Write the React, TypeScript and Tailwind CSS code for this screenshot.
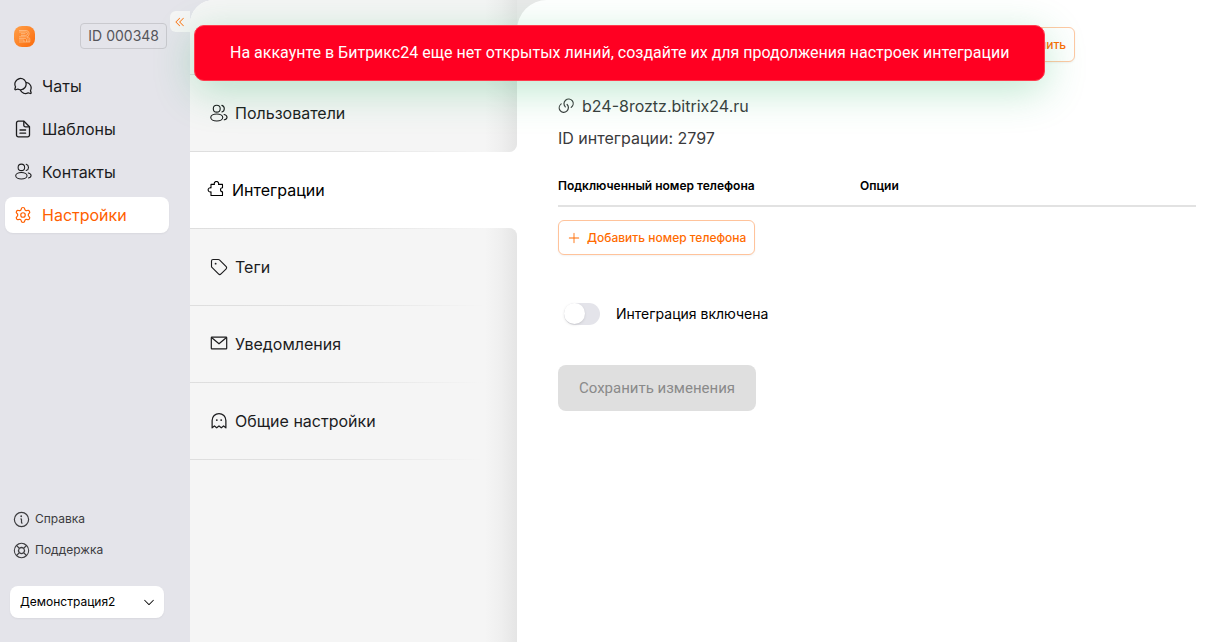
import type { ReactNode } from "react";
import { Settings, Tag } from "lucide-react";
import {
  PiCaretDoubleLeft,
  PiCaretDown,
  PiChatsCircle,
  PiGhost,
  PiInfo,
  PiLifebuoy,
  PiPlus,
} from "react-icons/pi";

function UsersIcon({ size }: { size: number }) {
  return (
    <svg width={size} height={size} viewBox="0 0 24 24" fill="none" stroke="currentColor" strokeWidth="1.5" strokeLinecap="round" aria-hidden="true">
      <circle cx="9" cy="6.2" r="4.6" />
      <path d="M15.8 1.8a4.600 4.600 0 0 1 0 8.800" />
      <ellipse cx="9" cy="18" rx="8" ry="4.600" />
      <path d="M18.800 14c2.300.6 3.900 1.900 3.900 3.600s-1.500 3-3.700 3.500" />
    </svg>
  );
}

function PuzzleIcon() {
  return (
    <svg width="18" height="18" viewBox="0 0 18 18" fill="none" stroke="currentColor" strokeWidth="1.1" strokeLinejoin="round" aria-hidden="true">
      <path d="M4 3.400H7.400a2.200 2.200 0 1 1 4.100 0H15.500V6.800a2 2 0 1 0 0 4V14.500H4V10.800a2.100 2.100 0 1 1 0-3.900Z" />
    </svg>
  );
}

function ChainIcon() {
  return (
    <svg width="17" height="17" viewBox="0 0 17 17" fill="none" stroke="currentColor" strokeWidth="1.2" strokeLinecap="round" aria-hidden="true">
      <path d="M3.200 5.900C1 7.700.700 10.600 2 12.400c1.600 2.300 4.800 2.500 6.800.7 2.100-1.900 2.100-4.700.3-6.600" />
      <path d="M13.200 8.900C15.400 7.100 15.700 4.200 14.400 2.400 12.800.1 9.600-.1 7.600 1.700 5.500 3.600 5.500 6.400 7.300 8.300" transform="translate(0 .5)" />
    </svg>
  );
}

function DocumentIcon() {
  return (
    <svg width="18" height="18" viewBox="0 0 18 18" fill="none" stroke="currentColor" strokeWidth="1.3" strokeLinecap="round" strokeLinejoin="round" aria-hidden="true">
      <path d="M10 1.200H4.300A1.800 1.800 0 0 0 2.500 3v12a1.800 1.800 0 0 0 1.800 1.800h9.400a1.800 1.800 0 0 0 1.800-1.800V6.800Z" />
      <path d="M9.800 1.400V5.200a1.700 1.700 0 0 0 1.700 1.700h3.800" />
      <path d="M6 10h5.600M6 13.200h5.600" />
    </svg>
  );
}

function EnvelopeIcon() {
  return (
    <svg width="18" height="18" viewBox="0 0 18 18" fill="none" stroke="currentColor" strokeWidth="1.2" strokeLinejoin="round" aria-hidden="true">
      <rect x="1.300" y="2.200" width="15.400" height="11.600" rx="0.6" />
      <path d="m1.500 2.500 7.500 6.300L16.500 2.500" />
    </svg>
  );
}

function Logo() {
  return (
    <svg width="21" height="21" viewBox="0 0 21 21" fill="none" role="img" aria-label="Логотип">
      <defs>
        <linearGradient id="logo-fill" x1="0" y1="0" x2="1" y2="1">
          <stop offset="0" stopColor="#ffa04a" />
          <stop offset="1" stopColor="#fb6a0b" />
        </linearGradient>
      </defs>
      <rect width="21" height="21" rx="8" fill="url(#logo-fill)" />
      <g stroke="#ffd0a5" strokeWidth="0.7" opacity="0.9">
        <path d="M5 4.500h7a3.200 3.200 0 0 1 1.300 6.100c1.600.3 2.500 1.400 2.500 3V16" />
        <path d="M5 6h6.800a1.700 1.700 0 0 1 0 3.400H7" />
        <path d="M7 7.700h4.500M5 10.800h6.500c1.700 0 2.600.9 2.600 2.500V16" />
        <path d="M5 12.400h6c1 0 1.500.5 1.500 1.500V16M5 14h5v2M5 16h11" />
      </g>
    </svg>
  );
}

const menu: { label: string; icon: ReactNode; active?: boolean }[] = [
  { label: "Чаты", icon: <PiChatsCircle size={20} /> },
  { label: "Шаблоны", icon: <DocumentIcon /> },
  { label: "Контакты", icon: <UsersIcon size={17} /> },
  { label: "Настройки", icon: <Settings size={18} strokeWidth={1.6} />, active: true },
];

const lowerSections: { label: string; icon: ReactNode }[] = [
  { label: "Теги", icon: <Tag size={18} strokeWidth={1.5} /> },
  { label: "Уведомления", icon: <EnvelopeIcon /> },
  { label: "Общие настройки", icon: <PiGhost size={20} className="-mx-px" /> },
];

function Divider() {
  return <div className="h-px bg-linear-to-r from-[#dedede] via-[#e2e2e2] to-transparent" />;
}

function SectionLink({ label, icon }: { label: string; icon: ReactNode }) {
  return (
    <div>
      <a href="#" className="flex h-[76px] items-center gap-[7px] pl-5">
        {icon}
        {label}
      </a>
      <Divider />
    </div>
  );
}

function EdgeShade() {
  return <div className="w-8 shrink-0 bg-linear-to-r from-transparent via-[#efefef] to-[#e5e5e5]" />;
}

function Sidebar() {
  return (
    <aside className="relative flex w-[190px] shrink-0 flex-col bg-[#e4e4ea]">
      <div className="flex h-[63px] items-center justify-between pt-[9px] pr-[23px] pl-3.5">
        <Logo />
        <span className="rounded border border-[#c9c9ce] px-[7px] text-sm leading-6 text-[#55555a]">ID 000348</span>
      </div>
      <button type="button" aria-label="Свернуть меню" className="absolute top-[11px] right-0 flex h-[21px] w-5 items-center justify-center rounded-l-md bg-[#f5f5f5] text-[#ff6b00]">
        <PiCaretDoubleLeft size={12} />
      </button>
      <nav className="flex flex-col gap-2 pt-[5px] pr-[21px] pl-[5px]">
        {menu.map((item) => (
          <a
            key={item.label}
            href="#"
            className={
              item.active
                ? "flex h-9 items-center rounded-lg bg-white pl-2 text-base text-[#ff5f00] shadow-xs"
                : "flex h-[35px] items-center rounded-lg pl-2 text-base text-[#1c1c1e]"
            }
          >
            <span className="flex w-5 justify-center">{item.icon}</span>
            <span className="pl-[9px]">{item.label}</span>
          </a>
        ))}
      </nav>
      <div className="mt-auto flex flex-col gap-[11px] pl-3 text-xs leading-5 text-[#3c3c3f]">
        <a href="#" className="flex items-center gap-1">
          <PiInfo size={19} />
          Справка
        </a>
        <a href="#" className="flex items-center gap-1">
          <PiLifebuoy size={19} />
          Поддержка
        </a>
      </div>
      <div className="grid pt-[26px] pr-[26px] pb-6 pl-2.5">
        <select aria-label="Аккаунт" className="col-start-1 row-start-1 h-8 appearance-none rounded-lg bg-white pl-2.5 text-xs text-black shadow-xs">
          <option>Демонстрация2</option>
        </select>
        <PiCaretDown size={14} className="pointer-events-none col-start-1 row-start-1 mr-2 self-center justify-self-end" />
      </div>
    </aside>
  );
}

function SettingsNav() {
  return (
    <nav className="flex w-[327px] shrink-0 flex-col overflow-hidden rounded-tl-3xl bg-white text-base text-[#1c1c1e]">
      <div className="flex overflow-hidden rounded-br-lg bg-[#f5f5f5]">
        <div className="flex-1">
          <div className="h-[74px]" />
          <Divider />
          <SectionLink label="Пользователи" icon={<UsersIcon size={18} />} />
        </div>
        <EdgeShade />
      </div>
      <a href="#" className="flex h-[76px] items-center gap-[7px] pl-[17px] text-black">
        <PuzzleIcon />
        Интеграции
      </a>
      <div className="flex flex-1 overflow-hidden rounded-tr-lg bg-[#f5f5f5]">
        <div className="flex-1">
          <Divider />
          {lowerSections.map((s) => (
            <SectionLink key={s.label} label={s.label} icon={s.icon} />
          ))}
        </div>
        <EdgeShade />
      </div>
    </nav>
  );
}

function Content() {
  return (
    <div className="flex min-w-0 flex-1 bg-[#e9e9e9]">
      <main className="min-w-0 flex-1 rounded-tl-[30px] bg-white pt-[27px] pr-[35px] pl-[41px]">
        <div className="flex pl-[433px]">
          <button type="button" className="h-[35px] rounded-md border border-[#ffc9a3] bg-white px-2 text-xs font-medium text-[#ff6b00] shadow-xs">
            Отключить
          </button>
        </div>
        <div className="mt-8 flex items-center gap-[7px] text-base text-[#3a3a3c]">
          <ChainIcon />
          b24-8roztz.bitrix24.ru
        </div>
        <p className="mt-2 text-base text-[#3a3a3c]">ID интеграции: 2797</p>
        <table className="mt-6 w-full table-fixed text-left text-xs text-black">
          <thead>
            <tr className="h-8 border-b-2 border-[#e2e2e2] align-top">
              <th className="w-[302px] pt-1 font-semibold">Подключенный номер телефона</th>
              <th className="pt-1 font-semibold">Опции</th>
            </tr>
          </thead>
        </table>
        <button type="button" className="mt-[13px] flex h-[35px] items-center gap-1.5 rounded-md border border-[#ffc39b] bg-white px-2 text-xs font-medium text-[#ff6b00] shadow-xs">
          <PiPlus size={14} />
          Добавить номер телефона
        </button>
        <label className="mt-12 flex h-[22px] items-center gap-4 pl-1.5 text-sm text-black">
          <input
            type="checkbox"
            role="switch"
            className="h-[22px] w-9 appearance-none rounded-full bg-[#e4e4ea] before:block before:size-[21px] before:rounded-full before:bg-white before:shadow"
          />
          Интеграция включена
        </label>
        <button type="button" disabled className="mt-10 h-[46px] rounded-lg bg-[#dfdfdf] px-[21px] font-[Roboto,sans-serif] text-[15px] text-[#8a8a8a]">
          Сохранить изменения
        </button>
      </main>
    </div>
  );
}

export default function App() {
  return (
    <div className="relative flex min-h-screen overflow-hidden bg-[#e4e4ea] font-[Inter,sans-serif]">
      <Sidebar />
      <SettingsNav />
      <Content />
      <div
        role="alert"
        className="absolute top-[25px] left-[194px] rounded-[10px] border border-[#ff3b4d] bg-[#ff0022] px-[35px] py-[15px] font-[Roboto,sans-serif] text-base leading-6 text-white shadow-[0_10px_40px_rgba(40,180,100,0.3)]"
      >
        На аккаунте в Битрикс24 еще нет открытых линий, создайте их для продолжения настроек интеграции
      </div>
    </div>
  );
}
